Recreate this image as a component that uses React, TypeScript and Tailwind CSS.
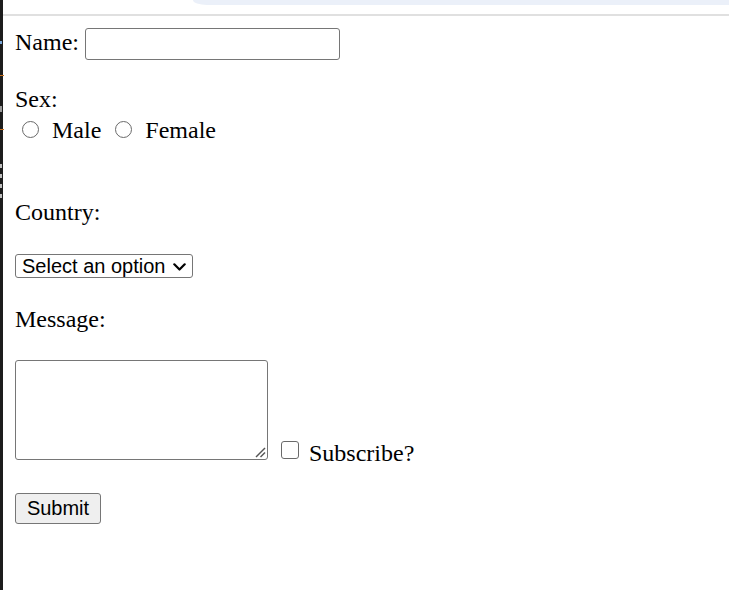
import React from "react";

export default function App() {
  return (
    <div className="flex min-h-[590px] w-full bg-white">
      <div className="relative w-[3px] shrink-0 bg-[#1c1c1c]">
        <span className="absolute left-0 top-[41px] h-[3px] w-[2px] bg-[#7aa7d8]" />
        <span className="absolute left-0 top-[75px] h-[1px] w-[4px] bg-[#c8701e]" />
        <span className="absolute left-0 top-[106px] h-[6px] w-[2px] bg-[#9a9a9a]" />
        <span className="absolute left-0 top-[129px] h-[1px] w-[4px] bg-[#c8701e]" />
        <span className="absolute left-0 top-[164px] h-[4px] w-[2px] bg-[#bdbdbd]" />
        <span className="absolute left-0 top-[174px] h-[4px] w-[2px] bg-[#bdbdbd]" />
        <span className="absolute left-0 top-[184px] h-[4px] w-[2px] bg-[#bdbdbd]" />
        <span className="absolute left-0 top-[194px] h-[4px] w-[2px] bg-[#bdbdbd]" />
      </div>
      <div className="flex-1">
        <div className="relative h-[14px]">
          <div className="absolute left-[190px] right-0 top-0 h-[5px] rounded-bl-[14px_5px] bg-[#ebf0f9]" />
        </div>
        <div className="h-[2px] bg-[#e0e0e0]" />
        <form className="pl-[12px] font-['Liberation_Serif','Times_New_Roman',serif] text-[24px] leading-[28px] text-black">
          <div className="mt-[12px] flex items-start">
            <span>Name:</span>
            <input
              type="text"
              className="ml-[6px] block h-[32px] w-[255px] rounded-[3px] border border-[#767676] bg-white px-[3px] font-['Liberation_Sans',Arial,sans-serif] text-[20px] outline-none"
            />
          </div>

          <div className="mt-[25px]">Sex:</div>
          <div className="mt-[3px] flex h-[28px] items-start">
            <input
              type="radio"
              name="sex"
              className="ml-[7px] mt-[5px] block h-[17px] w-[17px] appearance-none rounded-full border-[1.5px] border-[#6a6a6a] bg-white"
            />
            <span className="ml-[13px]">Male</span>
            <input
              type="radio"
              name="sex"
              className="ml-[14px] mt-[5px] block h-[17px] w-[17px] appearance-none rounded-full border-[1.5px] border-[#6a6a6a] bg-white"
            />
            <span className="ml-[13px]">Female</span>
          </div>

          <div className="mt-[54px]">Country:</div>
          <div className="relative mt-[28px] h-[24px] w-[178px]">
            <select className="block h-[24px] w-[178px] appearance-none rounded-[3px] border border-[#767676] bg-white pl-[6px] font-['Liberation_Sans',Arial,sans-serif] text-[20px] leading-[22px] text-black outline-none">
              <option>Select an option</option>
            </select>
            <svg
              className="pointer-events-none absolute right-[7px] top-[9px]"
              width="13"
              height="8"
              viewBox="0 0 13 8"
              fill="none"
            >
              <path d="M1.3 1.3 L6.5 6.5 L11.7 1.3" stroke="#000" strokeWidth="2.2" strokeLinecap="round" strokeLinejoin="round" />
            </svg>
          </div>

          <div className="mt-[27px]">Message:</div>
          <div className="mt-[27px] flex items-start">
            <div className="relative h-[100px] w-[253px]">
              <textarea className="block h-[100px] w-[253px] resize-none rounded-[3px] border border-[#767676] bg-white outline-none" />
              <svg
                className="pointer-events-none absolute bottom-[2px] right-[2px]"
                width="12"
                height="12"
                viewBox="0 0 12 12"
                fill="none"
              >
                <path d="M11 2 L2 11" stroke="#555" strokeWidth="1.4" />
                <path d="M11 6.5 L6.5 11" stroke="#555" strokeWidth="1.4" />
              </svg>
            </div>
            <div className="mt-[79px] flex items-start">
              <input
                type="checkbox"
                className="ml-[13px] mt-[2px] block h-[18px] w-[18px] appearance-none rounded-[3px] border-[1.5px] border-[#6a6a6a] bg-white"
              />
              <span className="ml-[10px]">Subscribe?</span>
            </div>
          </div>

          <div className="mt-[26px]">
            <button
              type="button"
              className="block h-[31px] w-[86px] rounded-[3px] border border-[#767676] bg-[#efefef] font-['Liberation_Sans',Arial,sans-serif] text-[20px] leading-[29px] text-black"
            >
              Submit
            </button>
          </div>
        </form>
      </div>
    </div>
  );
}
